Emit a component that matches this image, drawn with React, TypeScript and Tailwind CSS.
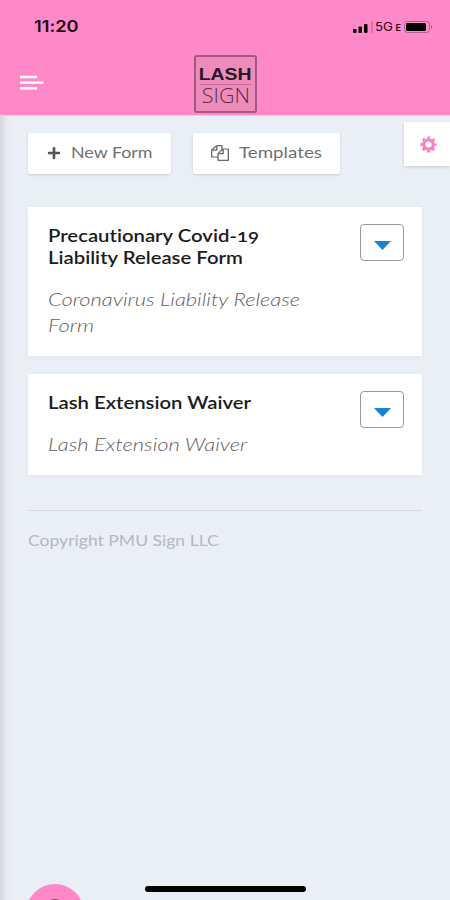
import type { ReactNode } from "react";
import { FaPlus } from "react-icons/fa";

const FORMS = [
  {
    key: "covid",
    title: ["Precautionary Covid-19", "Liability Release Form"],
    description: ["Coronavirus Liability Release", "Form"],
  },
  {
    key: "lash",
    title: ["Lash Extension Waiver"],
    description: ["Lash Extension Waiver"],
  },
];

function CopyIcon() {
  return (
    <svg viewBox="0 0 1792 1792" preserveAspectRatio="none" className="h-4 w-[18px] fill-[#666]">
      <path d="M1696 384q40 0 68 28t28 68v1216q0 40-28 68t-68 28h-960q-40 0-68-28t-28-68v-288h-544q-40 0-68-28t-28-68v-672q0-40 20-88t48-76l408-408q28-28 76-48t88-20h416q40 0 68 28t28 68v328q68-40 128-40h416zm-544 213l-299 299h299v-299zm-640-384l-299 299h299v-299zm196 647l316-316v-416h-384v416q0 40-28 68t-68 28h-416v640h512v-256q0-40 20-88t48-76zm956 804v-1152h-384v416q0 40-28 68t-68 28h-416v640h896z" />
    </svg>
  );
}

function StatusBar() {
  return (
    <div className="flex h-[52px] items-center justify-between pl-[34px] pr-[17px] text-[#1d0a16]">
      <span className="origin-left scale-x-[1.14] font-['Inter'] text-[16px] font-semibold">11:20</span>
      <div className="flex items-center pt-0.5">
        <svg viewBox="0 0 22 12" className="h-3 w-[22px]">
          <rect x="0" y="8" width="3.5" height="4" rx="1" />
          <rect x="5.5" y="5.5" width="3.5" height="6.5" rx="1" />
          <rect x="11" y="3" width="3.5" height="9" rx="1" />
          <path d="M19 0v12" stroke="#b35e90" />
        </svg>
        <span className="origin-left scale-x-110 font-['Inter'] text-[12px] leading-3">5G</span>
        <span className="ml-1 mt-0.5 font-['Inter'] text-[9px] font-semibold leading-3">E</span>
        <svg viewBox="0 0 29 12" className="ml-[3px] h-3 w-[29px]">
          <rect x=".5" y=".5" width="25" height="11" rx="3" fill="none" stroke="#b35e90" />
          <rect x="2" y="2" width="20" height="8" rx="1.5" fill="#000" />
          <path d="M27 4q2 2 0 4z" fill="#8f4070" />
        </svg>
      </div>
    </div>
  );
}

function Header() {
  return (
    <header className="h-[116px] border-b border-[#ffc3e3] bg-[#ff88c8]">
      <StatusBar />
      <div className="grid grid-cols-[194px_63px_1fr] pt-[3px]">
        <svg viewBox="0 0 24 16" className="ml-5 mt-5 h-4 w-6" stroke="#fff" strokeWidth="2.4">
          <path d="M0 2h17M0 7.6h23.5M0 13.2h17" />
        </svg>
        <div className="flex h-[58px] flex-col items-center rounded-[3px] border-2 border-[#a3597f] bg-[#ef8bbb] pt-2">
          <span className="scale-x-[1.14] font-['Liberation_Sans'] text-[17px] font-bold leading-[19px] text-[#25172a]">
            LASH
          </span>
          <span className="h-px w-[51px] bg-[#c96a9b]" />
          <span className="scale-x-110 font-['Open_Sans'] text-[19.5px] font-light leading-[22px] text-[#54304a]">
            SIGN
          </span>
        </div>
      </div>
    </header>
  );
}

function ActionButton({ children, className }: { children: ReactNode; className: string }) {
  return (
    <button
      className={`flex h-[41px] items-center rounded-[2px] bg-white pb-0.5 text-[15px] text-[#707070] shadow-[0_1px_3px_rgba(0,0,0,0.13)] ${className}`}
    >
      {children}
    </button>
  );
}

function SettingsTab() {
  return (
    <button className="-mt-[11px] flex h-[44px] w-[46px] items-center bg-white pl-4 shadow-[0_1px_3px_rgba(0,0,0,0.15)]">
      <svg viewBox="0 0 18 18" className="h-[17px] w-[17px]" fill="none" stroke="#ff7fc4">
        <circle cx="9" cy="9" r="4.9" strokeWidth="3.4" />
        <circle cx="9" cy="9" r="7.3" strokeWidth="2.6" strokeDasharray="2.867 2.867" strokeDashoffset="1.43" />
      </svg>
    </button>
  );
}

function FormCard({ title, description }: { title: string[]; description: string[] }) {
  return (
    <article className="flex justify-between bg-white pb-[17px] pl-5 pr-[18px] pt-[17px] shadow-[0_1px_4px_rgba(0,0,0,0.04)]">
      <div className="whitespace-nowrap">
        <h2 className="origin-left scale-x-[1.16] pt-px text-[17.5px] font-semibold leading-[22px] text-[#1c1c1c] oldstyle-nums">
          {title.map((line) => (
            <span key={line} className="block">{line}</span>
          ))}
        </h2>
        <p className="mt-[18px] origin-left scale-x-[1.25] text-[17.5px] font-light italic leading-[26px] text-[#606060]">
          {description.map((line) => (
            <span key={line} className="block">{line}</span>
          ))}
        </p>
      </div>
      <button className="flex h-[37px] w-[44px] items-center justify-center rounded-[4px] border-[1.5px] border-[#999] pt-[5px]">
        <svg viewBox="0 0 17 9" className="h-[9px] w-[17px] fill-[#1683d3]">
          <path d="M0 0h17L8.5 9z" />
        </svg>
      </button>
    </article>
  );
}

export default function App() {
  return (
    <div className="relative flex h-[900px] w-[450px] flex-col overflow-hidden bg-[#eaeef5] font-['Lato',sans-serif] [font-variant-ligatures:none]">
      <Header />
      <main className="grow bg-gradient-to-r from-[#d3d7da] via-[#e8ecf1] via-[7px] to-[#eaeef5] to-[14px] pl-7 pt-[17px]">
        <div className="flex">
          <ActionButton className="w-[143px] pl-[19px]">
            <FaPlus size={14} color="#555" />
            <span className="ml-2.5 origin-left scale-x-[1.19] whitespace-nowrap">New Form</span>
          </ActionButton>
          <ActionButton className="ml-[22px] w-[147px] pl-[18px]">
            <CopyIcon />
            <span className="ml-2.5 origin-left scale-x-[1.25] whitespace-nowrap">Templates</span>
          </ActionButton>
          <div className="ml-auto">
            <SettingsTab />
          </div>
        </div>

        <div className="mr-7 mt-[33px] flex flex-col gap-[18px]">
          {FORMS.map((form) => (
            <FormCard key={form.key} title={form.title} description={form.description} />
          ))}
        </div>

        <footer className="mr-7 mt-[35px] border-t border-[#d5d8dd] pt-[18px] text-[#b6b8bd]">
          <span className="block origin-left scale-x-[1.17] whitespace-nowrap text-[15px] leading-[22px]">
            Copyright PMU Sign LLC
          </span>
        </footer>
      </main>

      {/* Floating help bubble, mostly below the fold */}
      <div className="absolute left-[26px] top-[884px] flex h-[60px] w-[58px] justify-center rounded-full bg-[#ff88c8] pt-[15px]">
        <span className="h-6 w-5 rounded-full bg-[#7c4766]" />
      </div>
      {/* Home indicator */}
      <div className="absolute left-[145px] top-[886px] h-[6px] w-[161px] rounded-full bg-black" />
    </div>
  );
}
